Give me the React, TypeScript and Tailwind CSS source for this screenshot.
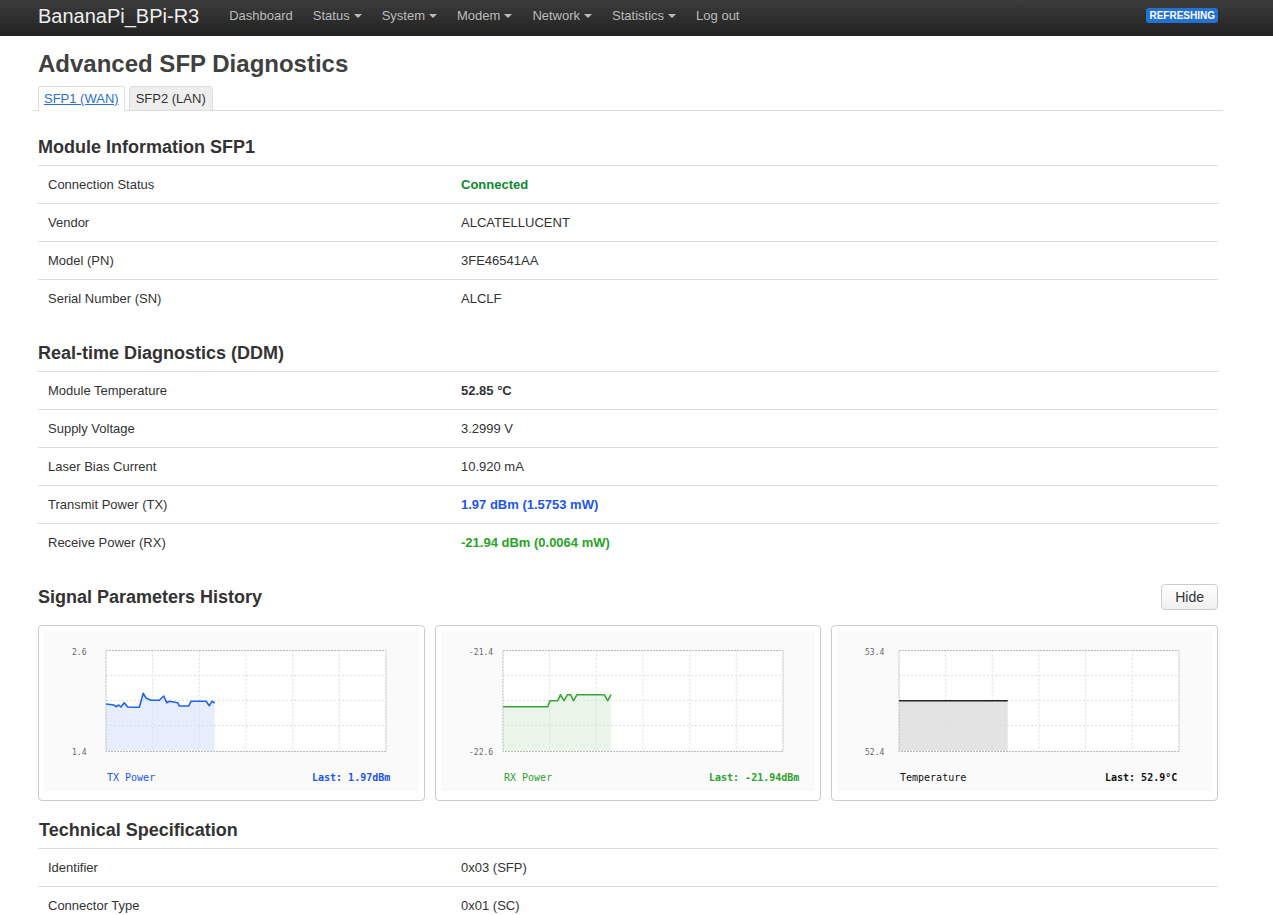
import React from 'react';

type Pt = [number, number];

interface ChartProps {
  top: string;
  bottom: string;
  name: string;
  last: string;
  line: string;
  fill: string;
  text: string;
  points: Pt[];
}

const navItems: { label: string; caret: boolean }[] = [
  { label: 'Dashboard', caret: false },
  { label: 'Status', caret: true },
  { label: 'System', caret: true },
  { label: 'Modem', caret: true },
  { label: 'Network', caret: true },
  { label: 'Statistics', caret: true },
  { label: 'Log out', caret: false },
];

const txPoints: Pt[] = [
  [62, 73], [70, 74], [72, 75.7], [74.7, 74], [77, 76], [80.3, 71.7], [83.7, 76], [88.7, 76.3],
  [95.3, 76.3], [99.3, 62.3], [102, 67], [107, 69.3], [115.3, 69.3], [119.7, 65], [122.7, 71.7],
  [125.3, 70.3], [133.7, 71.7], [135.3, 75], [144.7, 75], [147, 70.3], [162, 70.3], [165.3, 74.7],
  [168, 70.3], [170.7, 72],
];

const rxPoints: Pt[] = [
  [62, 75.7], [106.7, 75.7], [109, 69.7], [116.7, 69.7], [119.5, 63.7], [123, 69.7], [126.5, 63.7],
  [129.5, 63.7], [132.5, 69.7], [136, 63.7], [163.3, 63.7], [166.7, 69.7], [170, 63.7],
];

const tempPoints: Pt[] = [
  [62, 69.7], [170.7, 69.7],
];

function Chart({ top, bottom, name, last, line, fill, text, points }: ChartProps) {
  const lastX = points[points.length - 1][0];
  const poly = [...points, [lastX, 120] as Pt, [62, 120] as Pt].map((p) => p.join(',')).join(' ');
  const vLines = [1, 2, 3, 4, 5].map((i) => 62 + (280 / 6) * i);
  const hLines = [1, 2, 3].map((i) => 19.5 + 25 * i);

  return (
    <div className="flex-1 rounded-[4px] border border-[#ccc] bg-white px-[5px] pb-[9px] pt-[5px]">
      <div className="h-[160px] bg-[#fafafa]">
        <svg width="100%" height="160" style={{ fontFamily: '"DejaVu Sans Mono", monospace' }}>
          <rect x="62" y="19.5" width="280" height="101" fill="#fff" />
          <polygon points={poly} fill={fill} />
          {vLines.map((x) => (
            <line key={x} x1={x} y1="19.5" x2={x} y2="120.5" stroke="#ddd" strokeDasharray="2 2" />
          ))}
          {hLines.map((y) => (
            <line key={y} x1="62" y1={y} x2="342" y2={y} stroke="#ddd" strokeDasharray="2 2" />
          ))}
          <rect x="62" y="19.5" width="280" height="101" fill="none" stroke="#bbb" strokeDasharray="2 1" />
          <polyline points={points.map((p) => p.join(',')).join(' ')} fill="none" stroke={line} strokeWidth="1.6" strokeLinejoin="round" />
          <text x="28" y="24" fontSize="8" fill="#666">{top}</text>
          <text x="28" y="124" fontSize="8" fill="#666">{bottom}</text>
          <text x="63" y="150" fontSize="10" fill={text}>{name}</text>
          <text x="268" y="150" fontSize="10" fill={text} fontWeight="bold">{last}</text>
        </svg>
      </div>
    </div>
  );
}

function InfoTable({ rows }: { rows: { label: string; value: React.ReactNode }[] }) {
  return (
    <div className="text-[13px] text-[#333]">
      {rows.map((r) => (
        <div key={r.label} className="flex h-[38px] items-center border-t border-[#ddd]">
          <div className="w-[35%] pl-[10px]">{r.label}</div>
          <div className="pl-[10px]">{r.value}</div>
        </div>
      ))}
    </div>
  );
}

export default function App() {
  return (
    <div className="min-h-screen bg-white" style={{ fontFamily: '"Liberation Sans", Arial, sans-serif' }}>
      {/* top bar */}
      <nav className="h-[36px] bg-gradient-to-b from-[#3c3c3c] to-[#222]">
        <div className="ml-[38px] flex h-[31px] w-[1180px] items-center">
          <span className="text-[20px] leading-[24px] text-[#eee]">BananaPi_BPi-R3</span>
          <div className="ml-[20px] flex items-center">
            {navItems.map((item) => (
              <span key={item.label} className="flex items-center px-[10px] text-[13px] text-[#bbb]">
                {item.label}
                {item.caret && (
                  <span className="ml-[4px] inline-block h-0 w-0 border-x-[4px] border-t-[4px] border-x-transparent border-t-[#bbb]" />
                )}
              </span>
            ))}
          </div>
          <span className="ml-auto rounded-[3px] bg-[#2271d3] px-[3px] py-[1px] text-[10px] font-bold leading-[13px] text-white">
            REFRESHING
          </span>
        </div>
      </nav>

      <div className="ml-[38px] w-[1180px] pb-10">
        <h2 className="mt-[13px] text-[24px] font-bold leading-[30px] text-[#404040]">Advanced SFP Diagnostics</h2>

        {/* tabs */}
        <div className="-mx-[5px] mt-[7px] flex items-end border-b border-[#ddd] pl-[5px] text-[13px]">
          <span className="-mb-px rounded-t-[3px] border border-[#ddd] border-b-white bg-white px-[5px] py-[3px] leading-[17px] text-[#2a6fd6] underline">
            SFP1 (WAN)
          </span>
          <span className="-mb-px ml-[4px] rounded-t-[3px] border border-[#ddd] bg-[#eee] px-[6px] py-[3px] leading-[17px] text-[#333]">
            SFP2 (LAN)
          </span>
        </div>

        <h3 className="mt-[26px] text-[18px] font-bold leading-[20px] text-[#333]">Module Information SFP1</h3>
        <div className="mt-[8px]">
          <InfoTable
            rows={[
              { label: 'Connection Status', value: <span className="font-bold text-[#0b8a2d]">Connected</span> },
              { label: 'Vendor', value: 'ALCATELLUCENT' },
              { label: 'Model (PN)', value: '3FE46541AA' },
              { label: 'Serial Number (SN)', value: 'ALCLF' },
            ]}
          />
        </div>

        <h3 className="mt-[26px] text-[18px] font-bold leading-[20px] text-[#333]">Real-time Diagnostics (DDM)</h3>
        <div className="mt-[8px]">
          <InfoTable
            rows={[
              { label: 'Module Temperature', value: <span className="font-bold">52.85 °C</span> },
              { label: 'Supply Voltage', value: '3.2999 V' },
              { label: 'Laser Bias Current', value: '10.920 mA' },
              { label: 'Transmit Power (TX)', value: <span className="font-bold text-[#1a56f0]">1.97 dBm (1.5753 mW)</span> },
              { label: 'Receive Power (RX)', value: <span className="font-bold text-[#28a428]">-21.94 dBm (0.0064 mW)</span> },
            ]}
          />
        </div>

        <div className="mt-[23px] flex h-[26px] items-center justify-between">
          <h3 className="text-[18px] font-bold leading-[20px] text-[#333]">Signal Parameters History</h3>
          <button className="h-[26px] rounded-[4px] border border-[#ccc] bg-gradient-to-b from-white to-[#f0f0f0] px-[13px] text-[14px] text-[#333]">
            Hide
          </button>
        </div>

        <div className="mt-[15px] flex gap-[10px]">
          <Chart top="2.6" bottom="1.4" name="TX Power" last="Last: 1.97dBm" line="#1f62f0" fill="#e6edfc" text="#1a56f0" points={txPoints} />
          <Chart top="-21.4" bottom="-22.6" name="RX Power" last="Last: -21.94dBm" line="#36a836" fill="#e8f5e8" text="#2ea02e" points={rxPoints} />
          <Chart top="53.4" bottom="52.4" name="Temperature" last="Last: 52.9°C" line="#222" fill="#e3e3e3" text="#111" points={tempPoints} />
        </div>

        <h3 className="ml-px mt-[19px] text-[18px] font-bold leading-[20px] text-[#333]">Technical Specification</h3>
        <div className="mt-[8px]">
          <InfoTable
            rows={[
              { label: 'Identifier', value: '0x03 (SFP)' },
              { label: 'Connector Type', value: '0x01 (SC)' },
              { label: 'Encoding', value: '0x03 (NRZ)' },
              { label: 'Wavelength', value: '1310 nm' },
            ]}
          />
        </div>
      </div>
    </div>
  );
}
